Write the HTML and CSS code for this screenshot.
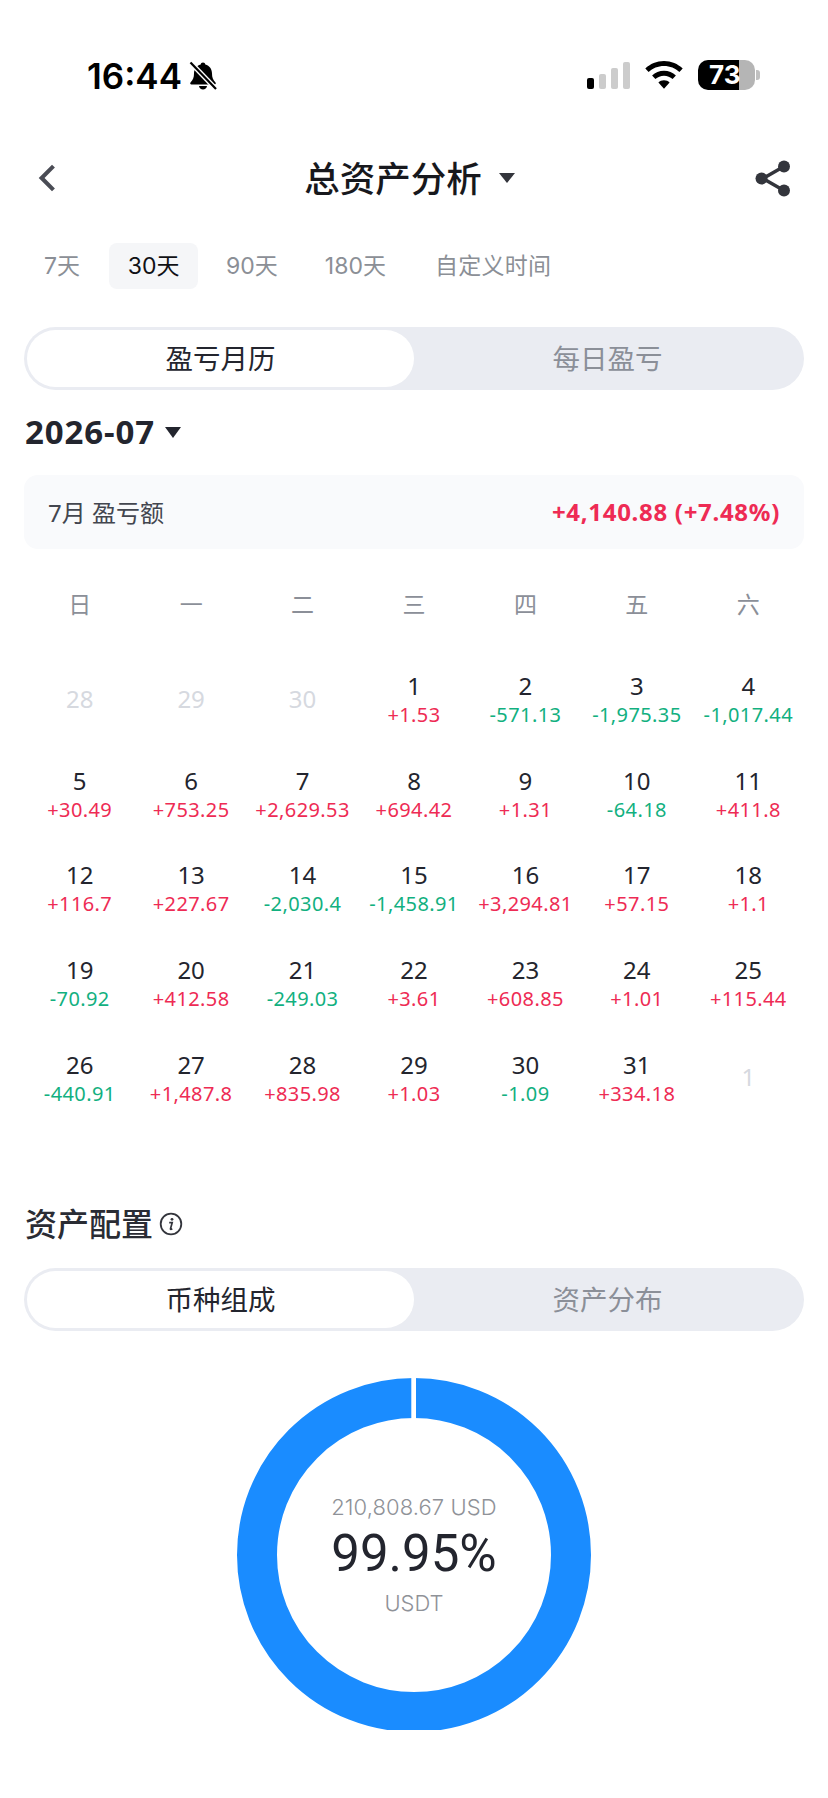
FILE: index.html
```html
<!DOCTYPE html>
<html lang="zh">
<head>
<meta charset="utf-8">
<title>总资产分析</title>
<link rel="stylesheet" href="styles.css">
</head>
<body>
<div class="page">
  <div class="status">
    <div class="status-left">
      <span class="clock">16:44</span>
      <svg class="bell" viewBox="0 0 28 30"><path d="M14 1.500c1.300 0 2.200.9 2.300 2.100 4.300 1 6.700 4.600 6.700 9 0 4.200 1 6 3.500 8.900.7.800.2 1.900-.9 1.900H2.400c-1.100 0-1.600-1.100-.9-1.900C4 18.600 5 16.800 5 12.600c0-4.400 2.400-8 6.700-9C11.800 2.400 12.700 1.500 14 1.500zM10 25h8c-.3 2.200-1.900 3.600-4 3.600s-3.700-1.400-4-3.600z" fill="#000"/><path d="M1.500 1.500 27 28" stroke="#fff" stroke-width="5"/><path d="M1.500 1.500 27 28" stroke="#000" stroke-width="2.200"/></svg>
    </div>
    <div class="status-right">
      <svg class="signal" viewBox="0 0 43 27"><rect x="0" y="16" width="7" height="11" rx="2" fill="#000"/><rect x="12" y="12" width="7" height="15" rx="2" fill="#ccc"/><rect x="24" y="6" width="7" height="21" rx="2" fill="#ccc"/><rect x="36" y="0" width="7" height="27" rx="2" fill="#ccc"/></svg>
      <svg class="wifi" viewBox="0 0 38 28"><path d="M19 0c7.300 0 13.900 2.900 18.700 7.500l-3.300 3.600C30.400 7.300 25 5 19 5S7.600 7.300 3.600 11.100L.3 7.500C5.100 2.900 11.700 0 19 0z"/><path d="M19 9.800c4.600 0 8.800 1.800 11.900 4.700l-3.300 3.600c-2.300-2.100-5.300-3.400-8.600-3.400s-6.300 1.300-8.600 3.400l-3.300-3.600c3.100-2.900 7.300-4.700 11.900-4.700z"/><path d="M19 19.300c2.200 0 4.200.9 5.600 2.200L19 27.800l-5.600-6.300c1.400-1.300 3.400-2.200 5.600-2.200z"/></svg>
      <div class="battery"><span class="battery-level">73</span></div>
      <span class="battery-tip"></span>
    </div>
  </div>

  <header class="nav">
    <svg class="back" viewBox="0 0 16 26"><path d="M14 2 3 13l11 11" fill="none" stroke="#4a4c55" stroke-width="3.800"/></svg>
    <div class="nav-title"><span>总资产分析</span><i class="tri tri-title"></i></div>
    <svg class="share" viewBox="0 0 36 37"><path d="M28 7 8 18.500 28 30" fill="none" stroke="#33353c" stroke-width="3.400"/><circle cx="29" cy="6.500" r="6" fill="#33353c"/><circle cx="6.500" cy="18.500" r="6" fill="#33353c"/><circle cx="29" cy="30.500" r="6" fill="#33353c"/></svg>
  </header>

  <nav class="ranges">
    <span class="range r7">7天</span>
    <span class="range active">30天</span>
    <span class="range r90">90天</span>
    <span class="range r180">180天</span>
    <span class="range custom">自定义时间</span>
  </nav>

  <div class="segment seg-calendar">
    <span class="seg-item on">盈亏月历</span>
    <span class="seg-item">每日盈亏</span>
  </div>

  <div class="month"><span>2026-07</span><i class="tri tri-month"></i></div>

  <div class="summary">
    <span class="summary-label">7月 盈亏额</span>
    <span class="summary-value">+4,140.88 (+7.48%)</span>
  </div>

  <div class="weekdays">
    <span>日</span><span>一</span><span>二</span><span>三</span><span>四</span><span>五</span><span>六</span>
  </div>

  <div class="calendar">
    <div class="day muted"><b>28</b></div>
    <div class="day muted"><b>29</b></div>
    <div class="day muted"><b>30</b></div>
    <div class="day"><b>1</b><em class="up">+1.53</em></div>
    <div class="day"><b>2</b><em class="down">-571.13</em></div>
    <div class="day"><b>3</b><em class="down">-1,975.35</em></div>
    <div class="day"><b>4</b><em class="down">-1,017.44</em></div>

    <div class="day"><b>5</b><em class="up">+30.49</em></div>
    <div class="day"><b>6</b><em class="up">+753.25</em></div>
    <div class="day"><b>7</b><em class="up">+2,629.53</em></div>
    <div class="day"><b>8</b><em class="up">+694.42</em></div>
    <div class="day"><b>9</b><em class="up">+1.31</em></div>
    <div class="day"><b>10</b><em class="down">-64.18</em></div>
    <div class="day"><b>11</b><em class="up">+411.8</em></div>

    <div class="day"><b>12</b><em class="up">+116.7</em></div>
    <div class="day"><b>13</b><em class="up">+227.67</em></div>
    <div class="day"><b>14</b><em class="down">-2,030.4</em></div>
    <div class="day"><b>15</b><em class="down">-1,458.91</em></div>
    <div class="day"><b>16</b><em class="up">+3,294.81</em></div>
    <div class="day"><b>17</b><em class="up">+57.15</em></div>
    <div class="day"><b>18</b><em class="up">+1.1</em></div>

    <div class="day"><b>19</b><em class="down">-70.92</em></div>
    <div class="day"><b>20</b><em class="up">+412.58</em></div>
    <div class="day"><b>21</b><em class="down">-249.03</em></div>
    <div class="day"><b>22</b><em class="up">+3.61</em></div>
    <div class="day"><b>23</b><em class="up">+608.85</em></div>
    <div class="day"><b>24</b><em class="up">+1.01</em></div>
    <div class="day"><b>25</b><em class="up">+115.44</em></div>

    <div class="day"><b>26</b><em class="down">-440.91</em></div>
    <div class="day"><b>27</b><em class="up">+1,487.8</em></div>
    <div class="day"><b>28</b><em class="up">+835.98</em></div>
    <div class="day"><b>29</b><em class="up">+1.03</em></div>
    <div class="day"><b>30</b><em class="down">-1.09</em></div>
    <div class="day"><b>31</b><em class="up">+334.18</em></div>
    <div class="day muted"><b>1</b></div>
  </div>

  <div class="section-title">
    <span>资产配置</span>
    <svg class="info" viewBox="0 0 24 24"><circle cx="12" cy="12" r="10.300" fill="none" stroke="#33353c" stroke-width="1.800"/><circle cx="13" cy="7.300" r="1.400" fill="#33353c"/><path d="M10.200 10.600h3l-1.700 6.200c-.1.600.5.800 1.800 0" fill="none" stroke="#33353c" stroke-width="1.700"/></svg>
  </div>

  <div class="segment seg-assets">
    <span class="seg-item on">币种组成</span>
    <span class="seg-item">资产分布</span>
  </div>

  <div class="donut">
    <svg class="ring" viewBox="0 0 354 352"><circle cx="177" cy="177" r="157" fill="none" stroke="#1a8cff" stroke-width="40"/><rect x="174.300" y="0" width="4.700" height="42" fill="#fff"/></svg>
    <div class="donut-text">
      <span class="donut-amount">210,808.67 USD</span>
      <span class="donut-pct">99.95%</span>
      <span class="donut-coin">USDT</span>
    </div>
  </div>
</div>
</body>
</html>
```

FILE: styles.css
```css
* { box-sizing: border-box; }

html, body { margin: 0; padding: 0; background: #fff; }

.page {
  width: 828px;
  height: 1798px;
  overflow: hidden;
  color: #23252e;
  font-family: "Noto Sans", "Noto Sans CJK SC", sans-serif;
}

/* status bar */
.status {
  height: 60px;
  margin-top: 60px;
  display: flex;
  justify-content: space-between;
  align-items: flex-start;
  padding: 0 68px 0 87px;
}
.status-left { display: flex; align-items: center; height: 32px; gap: 7px; }
.clock {
  font-family: Inter, sans-serif;
  font-weight: 600;
  font-size: 35px;
  line-height: 30px;
  color: #000;
}
.bell { width: 28px; height: 30px; }
.status-right { display: flex; align-items: center; height: 30px; }
.signal { width: 43px; height: 27px; }
.wifi { width: 38px; height: 28px; margin-left: 15px; fill: #000; }
.battery {
  width: 57px;
  height: 30px;
  margin-left: 15px;
  border-radius: 10px;
  background: linear-gradient(90deg, #000 0 41px, #b5b5b5 41px);
  color: #fff;
  font: 700 26px/30px Inter, sans-serif;
  padding-left: 11px;
}
.battery-tip {
  width: 4px;
  height: 10px;
  margin-left: 1px;
  border-radius: 0 3px 3px 0;
  background: #c0c0c0;
}

/* navigation */
.nav {
  height: 112px;
  padding: 4px 37px 0 38px;
  display: flex;
  align-items: center;
  justify-content: space-between;
}
.back { width: 18px; height: 28px; }
.share { width: 36px; height: 37px; }
.nav-title {
  display: flex;
  align-items: center;
  font-size: 35.500px;
  line-height: 48px;
  font-weight: 500;
  color: #17181d;
  margin-left: 8px;
}
.tri { display: block; width: 0; height: 0; border-style: solid; border-color: transparent; }
.tri-title { border-width: 10px 8px 0; border-top-color: #33353c; margin-left: 17px; }

/* date range tabs */
.ranges {
  height: 46px;
  margin-top: 11px;
  display: flex;
  align-items: center;
  font-size: 23px;
  font-family: Inter, "Noto Sans CJK SC", sans-serif;
  color: #8b8f96;
}
.range { line-height: 47px; height: 46px; }
.r7 { margin-left: 44px; }
.active {
  width: 89px;
  margin-left: 29px;
  text-align: center;
  background: #f5f6f8;
  border-radius: 8px;
  color: #101115;
}
.r90 { margin-left: 28px; }
.r180 { margin-left: 47px; }
.custom { margin-left: 49px; letter-spacing: .3px; }

/* two-way switch */
.segment {
  width: 780px;
  height: 63px;
  margin-left: 24px;
  padding: 3px;
  display: grid;
  grid-template-columns: 387px 1fr;
  background: #eaecf2;
  border-radius: 32px;
  font-size: 27.500px;
  line-height: 57px;
  text-align: center;
  color: #8b8f98;
}
.seg-calendar { margin-top: 38px; }
.seg-item.on {
  background: #fff;
  border-radius: 29px;
  color: #23252e;
}

/* month picker */
.month {
  height: 50px;
  margin: 17px 0 0 25px;
  display: flex;
  align-items: center;
  font-size: 33px;
  line-height: 50px;
  font-weight: 700;
  letter-spacing: .9px;
}
.tri-month { border-width: 11px 8px 0; border-top-color: #23252e; margin-left: 10px; }

/* monthly total */
.summary {
  width: 780px;
  height: 74px;
  margin: 18px 0 0 24px;
  padding: 0 24px 2px;
  display: flex;
  align-items: center;
  justify-content: space-between;
  background: #f9fafc;
  border-radius: 14px;
  font-size: 24px;
  color: #43464f;
}
.summary-value { font-weight: 700; color: #ee2b54; letter-spacing: .7px; }

/* calendar */
.weekdays, .calendar {
  width: 780px;
  margin-left: 24px;
  display: grid;
  grid-template-columns: repeat(7, 1fr);
  text-align: center;
}
.weekdays {
  height: 48px;
  margin-top: 32px;
  font-size: 23px;
  line-height: 46px;
  color: #8b8f98;
}
.calendar {
  margin-top: 22px;
  grid-auto-rows: 94.600px;
}
.day {
  display: flex;
  flex-direction: column;
  align-items: center;
  justify-content: center;
}
.day b { font-weight: 400; font-size: 24px; line-height: 33px; color: #23252e; }
.day em { font-style: normal; font-size: 20px; line-height: 25px; white-space: nowrap; letter-spacing: .4px; }
.day.muted b { color: #d6d9df; }
.up { color: #ee2b54; }
.down { color: #12b07f; }

/* asset allocation */
.section-title {
  height: 44px;
  margin: 78px 0 0 25px;
  display: flex;
  align-items: center;
  font-size: 32px;
  font-weight: 500;
  line-height: 42px;
  color: #2a2c34;
}
.info { width: 24px; height: 24px; margin-left: 6px; }
.seg-assets { margin-top: 22px; }

/* allocation ring */
.donut {
  width: 354px;
  height: 352px;
  margin: 47px 0 0 237px;
  display: grid;
}
.ring, .donut-text { grid-area: 1 / 1; }
.ring { width: 354px; height: 352px; display: block; }
.donut-text {
  height: 354px;
  display: flex;
  flex-direction: column;
  align-items: center;
  font-family: Inter, sans-serif;
  color: #8f9298;
  font-size: 22px;
  padding-top: 113px;
}
.donut-amount { line-height: 32px; font-weight: 300; letter-spacing: .1px; }
.donut-pct { font-family: Roboto, sans-serif; font-size: 51px; line-height: 60px; font-weight: 400; color: #23252e; margin-top: 1px; }
.donut-coin { line-height: 32px; font-weight: 300; margin-top: 3px; }
```
